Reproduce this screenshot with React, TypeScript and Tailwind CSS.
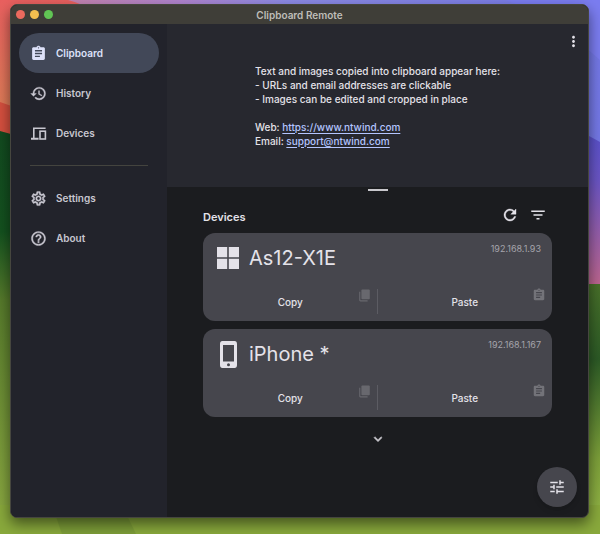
import React from 'react';
import {
  MdAssignment,
  MdFilterList,
  MdHelpOutline,
  MdHistory,
  MdKeyboardArrowDown,
  MdMoreVert,
  MdOutlineSettings,
  MdRefresh,
  MdTune,
} from 'react-icons/md';

interface IconProps {
  className?: string;
}

interface NavItemProps {
  icon: React.ComponentType<IconProps>;
  label: string;
  active?: boolean;
}

interface DeviceCardProps {
  name: string;
  ip: string;
  icon: React.ReactNode;
}

const Wallpaper: React.FC = () => (
  <svg
    className="absolute inset-0 h-full w-full"
    viewBox="0 0 600 534"
    preserveAspectRatio="none"
    aria-hidden="true"
  >
    <defs>
      <linearGradient id="sky" x1="0" x2="1" y1="0" y2="0">
        <stop offset="0.1" stopColor="#c583ac" />
        <stop offset="0.3" stopColor="#b184cf" />
        <stop offset="0.48" stopColor="#8d8be6" />
        <stop offset="1" stopColor="#7478e6" />
      </linearGradient>
      <linearGradient id="coral" x1="0" x2="0" y1="0" y2="1">
        <stop offset="0" stopColor="#e9605f" />
        <stop offset="1" stopColor="#dd7f57" />
      </linearGradient>
      <linearGradient id="leftHill" x1="0" x2="0" y1="0" y2="1">
        <stop offset="0" stopColor="#124a20" />
        <stop offset="0.25" stopColor="#14521f" />
        <stop offset="0.42" stopColor="#567a2b" />
        <stop offset="1" stopColor="#8eac43" />
      </linearGradient>
      <linearGradient id="dusk" x1="0" x2="0" y1="0" y2="1">
        <stop offset="0" stopColor="#5450cc" />
        <stop offset="0.35" stopColor="#6a55c4" />
        <stop offset="1" stopColor="#c0668c" />
      </linearGradient>
      <linearGradient id="rightHill" x1="0" x2="0" y1="0" y2="1">
        <stop offset="0" stopColor="#48702a" />
        <stop offset="0.3" stopColor="#2c5a26" />
        <stop offset="0.7" stopColor="#7da03a" />
        <stop offset="1" stopColor="#97b948" />
      </linearGradient>
    </defs>
    <rect width="600" height="534" fill="url(#sky)" />
    <path d="M0 0H68Q82 3 92 12V120H0Z" fill="url(#coral)" />
    <path d="M410 0H505Q550 15 600 60V0Z" fill="#7b7df0" />
    <path d="M0 102L40 116V150H0Z" fill="#d5503f" />
    <path d="M0 131L40 142V534H0Z" fill="url(#leftHill)" />
    <path d="M560 120L600 142V290H560Z" fill="url(#dusk)" />
    <path d="M560 284H600V534H560Z" fill="url(#rightHill)" />
    <path d="M0 505H600V534H0Z" fill="#89a93c" />
    <path d="M52 505H122L136 534H62Z" fill="#7d9d38" />
  </svg>
);

const DevicesIcon: React.FC<IconProps> = ({ className }) => (
  <svg className={className} viewBox="0 0 17 17" fill="none" stroke="currentColor" strokeWidth="1.6" aria-hidden="true">
    <path d="M15.6 3.3H3.8V13.3" />
    <path d="M1 13.8H8.6" strokeWidth="2" />
    <rect x="10" y="6.2" width="5.4" height="7.8" />
  </svg>
);

const WindowsIcon: React.FC = () => (
  <svg className="h-[22px] w-[22px]" viewBox="0 0 22 22" fill="currentColor" aria-hidden="true">
    <path d="M0 0H10.2V10.2H0ZM11.8 0H22V10.2H11.8ZM0 11.8H10.2V22H0ZM11.8 11.8H22V22H11.8Z" />
  </svg>
);

const PhoneIcon: React.FC = () => (
  <svg className="h-[27px] w-[17px]" viewBox="0 0 17 27" fill="currentColor" aria-hidden="true">
    <path
      fillRule="evenodd"
      d="M3.2 0H13.8A3 3 0 0 1 17 3V24A3 3 0 0 1 13.8 27H3.2A3 3 0 0 1 0 24V3A3 3 0 0 1 3.2 0ZM3 4V20.5H14V4ZM8.5 22.2A1.5 1.5 0 1 0 8.5 25.2A1.5 1.5 0 1 0 8.5 22.2Z"
    />
  </svg>
);

const CopyIcon: React.FC = () => (
  <svg className="h-[13px] w-[11px]" viewBox="0 0 11 13" fill="currentColor" aria-hidden="true">
    <rect x="2.4" y="0.5" width="8.4" height="9.8" rx="1" />
    <path d="M0.2 2.7H1.3V11.3H8.6V12.4H1.3A1.1 1.1 0 0 1 0.2 11.3Z" />
  </svg>
);

const NavItem: React.FC<NavItemProps> = ({ icon: Icon, label, active = false }) => (
  <a
    href="#"
    aria-current={active ? 'page' : undefined}
    className={`flex h-10 items-center gap-[9px] rounded-full px-[11px] text-[10px] font-semibold ${
      active ? 'bg-[#424858] text-[#dde1f9]' : 'text-[#c8c7d0]'
    }`}
  >
    <Icon
      className={
        active ? 'h-[17px] w-[17px]' : 'h-[17px] w-[17px] [&>path:last-child]:stroke-current [&>path:last-child]:stroke-[0.5]'
      }
    />
    {label}
  </a>
);

const DeviceCard: React.FC<DeviceCardProps> = ({ name, ip, icon }) => (
  <article className="flex h-[88px] flex-col justify-between rounded-xl bg-[#46464d] text-[#e4e2e9]">
    <div className="flex h-[50px] justify-between pr-[11px] pl-3">
      <div className="flex items-center gap-2">
        <span className="flex w-[26px] justify-center">{icon}</span>
        <h3 className="text-[20px] leading-6">{name}</h3>
      </div>
      <span className="pt-[10px] text-[9px] leading-3 text-[#a5a4ab]">{ip}</span>
    </div>
    <div className="grid h-[38px] grid-cols-2">
      <button type="button" className="relative text-[10px] font-medium">
        Copy
        <span className="absolute top-[6px] right-2 text-[#68686e]">
          <CopyIcon />
        </span>
        <span className="absolute top-[6px] right-0 h-[25px] w-px bg-[#5c5c63]" />
      </button>
      <button type="button" className="relative text-[10px] font-medium">
        Paste
        <MdAssignment className="absolute top-[5px] right-[6px] h-[14px] w-[14px] text-[#737379]" />
      </button>
    </div>
  </article>
);

export default function App() {
  return (
    <div className="relative flex min-h-screen overflow-hidden bg-[#89a93c] pt-1 pr-[11px] pb-4 pl-[10px] font-[Inter,sans-serif]">
      <Wallpaper />
      <div className="relative flex flex-1 flex-col overflow-hidden rounded-[7px] border border-[#46463f] bg-[#1b1c1f] shadow-[0_6px_14px_rgba(0,0,0,0.5)]">
        <header className="grid h-[19px] grid-cols-3 items-center bg-[#3f3e38] px-[5px]">
          <div className="flex gap-[5px]">
            <button type="button" aria-label="Close" className="h-[9px] w-[9px] rounded-full bg-[#ec6a5e]" />
            <button type="button" aria-label="Minimize" className="h-[9px] w-[9px] rounded-full bg-[#f4bf4f]" />
            <button type="button" aria-label="Zoom" className="h-[9px] w-[9px] rounded-full bg-[#61c554]" />
          </div>
          <h1 className="text-center text-[10px] leading-4 font-semibold text-[#bebdb8]">Clipboard Remote</h1>
        </header>

        <div className="flex flex-1">
          <nav className="w-[156px] shrink-0 bg-[#22232b] px-2 pt-[9px]">
            <NavItem icon={MdAssignment} label="Clipboard" active />
            <NavItem icon={MdHistory} label="History" />
            <NavItem icon={DevicesIcon} label="Devices" />
            <hr className="mx-[11px] my-3 border-[#44443f]" />
            <NavItem icon={MdOutlineSettings} label="Settings" />
            <NavItem icon={MdHelpOutline} label="About" />
          </nav>

          <main className="relative flex flex-1 flex-col">
            <section className="flex h-[163px] items-center justify-center bg-[#27282f]">
              <div className="text-[10px] leading-[14px] font-medium text-[#e4e2e9]">
                <p>Text and images copied into clipboard appear here:</p>
                <p>- URLs and email addresses are clickable</p>
                <p>- Images can be edited and cropped in place</p>
                <br />
                <p>
                  Web:{' '}
                  <a href="https://www.ntwind.com" className="text-[#b4c5ff] underline underline-offset-2">
                    https://www.ntwind.com
                  </a>
                </p>
                <p>
                  Email:{' '}
                  <a href="mailto:support@ntwind.com" className="text-[#b4c5ff] underline underline-offset-2">
                    support@ntwind.com
                  </a>
                </p>
              </div>
              <button type="button" aria-label="More options" className="absolute top-[9px] right-[6px] text-[#e4e2e9]">
                <MdMoreVert className="h-[17px] w-[17px]" />
              </button>
            </section>

            <section className="flex flex-col px-9 text-[#e4e2e9]">
              <div className="mt-[2px] h-[2px] w-5 self-center bg-[#c8c7cc]" />
              <div className="mt-[15px] flex h-[18px] items-center justify-between pr-[5px]">
                <h2 className="pt-1 text-[11px] leading-4 font-semibold">Devices</h2>
                <div className="flex gap-[10px]">
                  <button type="button" aria-label="Refresh">
                    <MdRefresh className="h-[18px] w-[18px] [&>path:last-child]:stroke-current [&>path:last-child]:stroke-[0.5]" />
                  </button>
                  <button type="button" aria-label="Filter">
                    <MdFilterList className="h-[18px] w-[18px]" />
                  </button>
                </div>
              </div>
              <div className="mt-[9px] flex flex-col gap-2">
                <DeviceCard name="As12-X1E" ip="192.168.1.93" icon={<WindowsIcon />} />
                <DeviceCard name="iPhone *" ip="192.168.1.167" icon={<PhoneIcon />} />
              </div>
              <button type="button" aria-label="Show more" className="mt-[14px] self-center text-[#c8c7cc]">
                <MdKeyboardArrowDown className="h-4 w-4 [&>path:last-child]:stroke-current [&>path:last-child]:stroke-[0.8]" />
              </button>
            </section>

            <button
              type="button"
              aria-label="Adjust"
              className="absolute right-[11px] bottom-[10px] flex h-10 w-10 items-center justify-center rounded-full bg-[#46464d] text-[#e4e2e9] shadow-md"
            >
              <MdTune className="h-[18px] w-[18px]" />
            </button>
          </main>
        </div>
      </div>
    </div>
  );
}
